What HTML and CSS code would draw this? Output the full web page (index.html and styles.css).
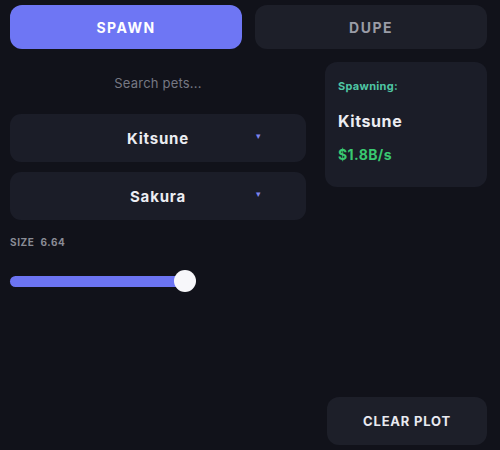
FILE: index.html
```html
<!DOCTYPE html>
<html lang="en">
<head>
  <meta charset="UTF-8">
  <title>Pet Spawner</title>
  <meta name="viewport" content="width=device-width, initial-scale=1.0">
  <link rel="stylesheet" href="styles.css">
</head>
<body>
  <div class="app">
    <div class="tabs">
      <button class="tab active">SPAWN</button>
      <button class="tab">DUPE</button>
    </div>

    <div class="main">
      <div class="controls">
        <div class="search">Search pets...</div>

        <div class="select">
          <span class="select-value">Kitsune</span>
          <span class="caret">&#9662;</span>
        </div>
        <div class="select">
          <span class="select-value">Sakura</span>
          <span class="caret">&#9662;</span>
        </div>

        <div class="size-label">SIZE <span class="size-value">6.64</span></div>
        <div class="slider">
          <div class="slider-fill" style="width: 100%"></div>
          <div class="slider-thumb"></div>
        </div>
      </div>

      <div class="status">
        <div class="status-title">Spawning:</div>
        <div class="status-name">Kitsune</div>
        <div class="status-rate">$1.8B/s</div>
      </div>
    </div>

    <div class="footer">
      <button class="clear">CLEAR PLOT</button>
    </div>
  </div>
</body>
</html>
```

FILE: styles.css
```css
html, body {
  margin: 0;
  background: #11121a;
}

body {
  font-family: Inter, "Open Sans", sans-serif;
  color: #ecedf2;
}

.app {
  height: 450px;
  display: flex;
  flex-direction: column;
  box-sizing: border-box;
  padding: 5px 13px 5px 10px;
}

button {
  font-family: inherit;
  border: none;
  cursor: pointer;
}

.tabs {
  display: grid;
  grid-template-columns: 1fr 1fr;
  gap: 13px;
}

.tab {
  height: 44px;
  border-radius: 12px;
  background: #1d1f29;
  color: #9a9ca6;
  font-size: 14px;
  font-weight: 700;
  letter-spacing: 1.5px;
}

.tab.active {
  background: #6e76f4;
  color: #ffffff;
}

.main {
  display: grid;
  grid-template-columns: 296px 1fr;
  gap: 19px;
  align-items: start;
}

.controls {
  display: flex;
  flex-direction: column;
}

.search {
  height: 65px;
  display: flex;
  align-items: center;
  justify-content: center;
  padding-top: 2px;
  box-sizing: border-box;
  font-size: 13px;
  letter-spacing: 0.2px;
  color: #767883;
}

.select {
  position: relative;
  height: 48px;
  margin-bottom: 10px;
  border-radius: 11px;
  background: #1b1d28;
  display: flex;
  align-items: center;
  justify-content: center;
}

.select-value {
  font-size: 15px;
  font-weight: 700;
  letter-spacing: 0.8px;
  color: #ecedf2;
}

.caret {
  position: absolute;
  left: 246px;
  top: 16px;
  font-size: 9px;
  color: #7d84ee;
}

.size-label {
  margin-top: 6px;
  font-size: 10px;
  font-weight: 700;
  color: #8a8c95;
  letter-spacing: 0.6px;
}

.size-value {
  margin-left: 3px;
}

.slider {
  position: relative;
  width: 175px;
  height: 11px;
  margin-top: 28px;
}

.slider-fill {
  height: 100%;
  border-radius: 6px;
  background: #6c74f2;
}

.slider-thumb {
  position: absolute;
  right: -11px;
  top: -6px;
  width: 22px;
  height: 22px;
  border-radius: 50%;
  background: #f7f7fa;
}

.status {
  margin-top: 13px;
  height: 125px;
  border-radius: 12px;
  background: #1b1d28;
  padding: 17px 13px;
  box-sizing: border-box;
}

.status-title {
  font-size: 11px;
  font-weight: 700;
  letter-spacing: 0.3px;
  color: #4fc6a4;
}

.status-name {
  margin-top: 18px;
  font-size: 16px;
  font-weight: 700;
  letter-spacing: 0.6px;
  color: #ecedf2;
}

.status-rate {
  margin-top: 15px;
  font-size: 14px;
  font-weight: 700;
  letter-spacing: 0.4px;
  color: #39c971;
}

.footer {
  margin-top: auto;
  display: flex;
  justify-content: flex-end;
}

.clear {
  width: 160px;
  height: 48px;
  border-radius: 12px;
  background: #1d1f29;
  color: #e9eaf0;
  font-size: 13px;
  font-weight: 700;
  letter-spacing: 0.8px;
}
```
